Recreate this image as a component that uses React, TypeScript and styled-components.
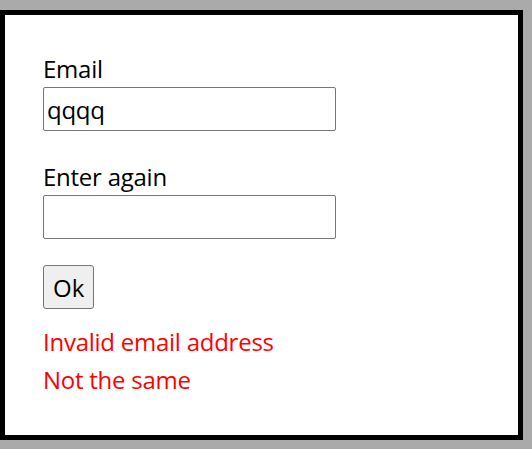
import React from "react";
import styled, { createGlobalStyle } from "styled-components";

const Global = createGlobalStyle`
  html, body { margin: 0; padding: 0; background: #aaaaaa; }
  body { font-family: "Open Sans", "Noto Sans", sans-serif; }
`;

const Frame = styled.div`
  box-sizing: border-box;
  margin-top: 10px;
  width: 523px;
  height: 430px;
  border: 5px solid #000;
  background: #fff;
  padding: 39px 38px 0 38px;
  display: flex;
  flex-direction: column;
  align-items: flex-start;
  font-size: 24px;
  letter-spacing: -0.25px;
`;

const Label = styled.label<{ $top?: number }>`
  display: block;
  line-height: 32px;
  color: #000;
  margin-top: ${(p) => p.$top ?? 0}px;
  position: relative;
  top: -1px;
`;

const Input = styled.input`
  box-sizing: border-box;
  width: 293px;
  height: 44px;
  margin-top: 1px;
  border: 1px solid #767676;
  border-radius: 2px;
  padding: 0 3px;
  font: inherit;
  font-size: 24px;
  letter-spacing: -0.25px;
  color: #000;
  background: #fff;
  outline: none;
`;

const Button = styled.button`
  box-sizing: border-box;
  margin-top: 26px;
  height: 44px;
  padding: 0 9px;
  border: 1px solid #767676;
  border-radius: 3px;
  background: #efefef;
  font: inherit;
  font-size: 24px;
  color: #000;
`;

const Errors = styled.div`
  margin-top: 17px;
  display: flex;
  flex-direction: column;
  gap: 6px;
`;

const ErrorText = styled.div`
  color: #ff0000;
  line-height: 32px;
`;

export default function App() {
  return (
    <>
      <Global />
      <Frame>
        <Label>Email</Label>
        <Input defaultValue="qqqq" />
        <Label $top={31}>Enter again</Label>
        <Input />
        <Button>Ok</Button>
        <Errors>
          <ErrorText>Invalid email address</ErrorText>
          <ErrorText>Not the same</ErrorText>
        </Errors>
      </Frame>
    </>
  );
}
